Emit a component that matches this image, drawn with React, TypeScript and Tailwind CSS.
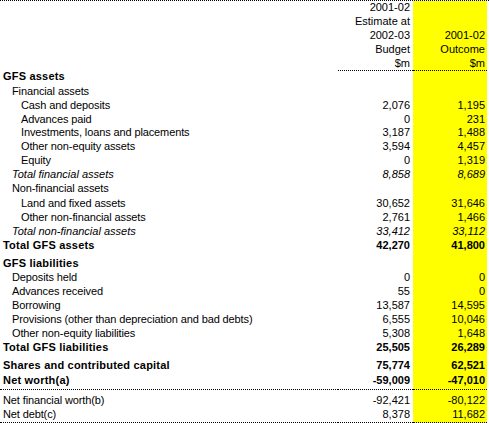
type Kind = "head" | "item" | "italic" | "total";

type Row = {
  label: string;
  indent: 0 | 1 | 2;
  kind: Kind;
  budget?: string;
  outcome?: string;
  h: string;
  line?: boolean;
  pb?: string;
};

const rows: Row[] = [
  { label: "GFS assets", indent: 0, kind: "head", h: "h-[12px]" },
  { label: "Financial assets", indent: 1, kind: "item", h: "h-[15px]" },
  { label: "Cash and deposits", indent: 2, kind: "item", budget: "2,076", outcome: "1,195", h: "h-[14px]" },
  { label: "Advances paid", indent: 2, kind: "item", budget: "0", outcome: "231", h: "h-[14px]" },
  { label: "Investments, loans and placements", indent: 2, kind: "item", budget: "3,187", outcome: "1,488", h: "h-[13px]" },
  { label: "Other non-equity assets", indent: 2, kind: "item", budget: "3,594", outcome: "4,457", h: "h-[14px]" },
  { label: "Equity", indent: 2, kind: "item", budget: "0", outcome: "1,319", h: "h-[14px]" },
  { label: "Total financial assets", indent: 1, kind: "italic", budget: "8,858", outcome: "8,689", h: "h-[14px]" },
  { label: "Non-financial assets", indent: 1, kind: "item", h: "h-[14px]" },
  { label: "Land and fixed assets", indent: 2, kind: "item", budget: "30,652", outcome: "31,646", h: "h-[15px]" },
  { label: "Other non-financial assets", indent: 2, kind: "item", budget: "2,761", outcome: "1,466", h: "h-[14px]" },
  { label: "Total non-financial assets", indent: 1, kind: "italic", budget: "33,412", outcome: "33,112", h: "h-[14px]" },
  { label: "Total GFS assets", indent: 0, kind: "total", budget: "42,270", outcome: "41,800", h: "h-[14px]" },
  { label: "GFS liabilities", indent: 0, kind: "head", h: "h-[18px]" },
  { label: "Deposits held", indent: 1, kind: "item", budget: "0", outcome: "0", h: "h-[14px]" },
  { label: "Advances received", indent: 1, kind: "item", budget: "55", outcome: "0", h: "h-[14px]" },
  { label: "Borrowing", indent: 1, kind: "item", budget: "13,587", outcome: "14,595", h: "h-[14px]" },
  { label: "Provisions (other than depreciation and bad debts)", indent: 1, kind: "item", budget: "6,555", outcome: "10,046", h: "h-[14px]" },
  { label: "Other non-equity liabilities", indent: 1, kind: "item", budget: "5,308", outcome: "1,648", h: "h-[14px]" },
  { label: "Total GFS liabilities", indent: 0, kind: "total", budget: "25,505", outcome: "26,289", h: "h-[14px]" },
  { label: "Shares and contributed capital", indent: 0, kind: "total", budget: "75,774", outcome: "62,521", h: "h-[18px]" },
  { label: "Net worth(a)", indent: 0, kind: "total", budget: "-59,009", outcome: "-47,010", h: "h-[18px]", line: true, pb: "pb-[2px]" },
  { label: "Net financial worth(b)", indent: 0, kind: "item", budget: "-92,421", outcome: "-80,122", h: "h-[17px]" },
  { label: "Net debt(c)", indent: 0, kind: "item", budget: "8,378", outcome: "11,682", h: "h-[16px]", line: true, pb: "pb-[1px]" },
];

const indents = ["pl-[3px]", "pl-[12px]", "pl-[21px]"];

// label / number styling per row kind
const kindText: Record<Kind, { label: string; num: string }> = {
  head: { label: "font-bold tracking-[0.2px]", num: "" },
  item: { label: "tracking-[-0.12px]", num: "" },
  italic: { label: "italic", num: "italic" },
  total: { label: "font-bold tracking-[0.2px]", num: "font-bold" },
};

const header = [
  { budget: "2001-02", outcome: "", h: "h-[13px]" },
  { budget: "Estimate at", outcome: "", h: "h-[14px]" },
  { budget: "2002-03", outcome: "2001-02", h: "h-[14px]" },
  { budget: "Budget", outcome: "Outcome", h: "h-[14px]" },
  { budget: "$m", outcome: "$m", h: "h-[15px]" },
];

export default function App() {
  return (
    <div className="w-[489px] h-[423px] bg-white text-black font-['Liberation_Sans',Arial,sans-serif] text-[11px] leading-[14px] overflow-hidden">
      <div className="border-t border-dotted border-black">
        <div className="grid grid-cols-[338px_75px_74px]">
          {header.map((r, i) => {
            const last = i === header.length - 1;
            const line = last ? "border-b border-dotted border-black" : "";
            return (
              <div key={i} className="contents">
                <div className={r.h} />
                <div className={`${r.h} ${line} flex items-end justify-end pr-[3px] whitespace-nowrap`}>
                  {r.budget}
                </div>
                <div className={`${r.h} ${line} flex items-end justify-end pr-[2px] bg-[#ffff00] whitespace-nowrap`}>
                  {r.outcome}
                </div>
              </div>
            );
          })}

          {rows.map((r) => {
            const t = kindText[r.kind];
            const line = r.line ? "border-b border-dotted border-black" : "";
            const pb = r.pb ?? "";
            return (
              <div key={r.label} className="contents">
                <div className={`${r.h} ${line} ${pb} ${indents[r.indent]} ${t.label} flex items-end whitespace-nowrap`}>
                  {r.label}
                </div>
                <div className={`${r.h} ${line} ${pb} ${t.num} flex items-end justify-end pr-[3px]`}>
                  {r.budget}
                </div>
                <div className={`${r.h} ${line} ${pb} ${t.num} flex items-end justify-end pr-[2px] bg-[#ffff00]`}>
                  {r.outcome}
                </div>
              </div>
            );
          })}
        </div>
      </div>
    </div>
  );
}
